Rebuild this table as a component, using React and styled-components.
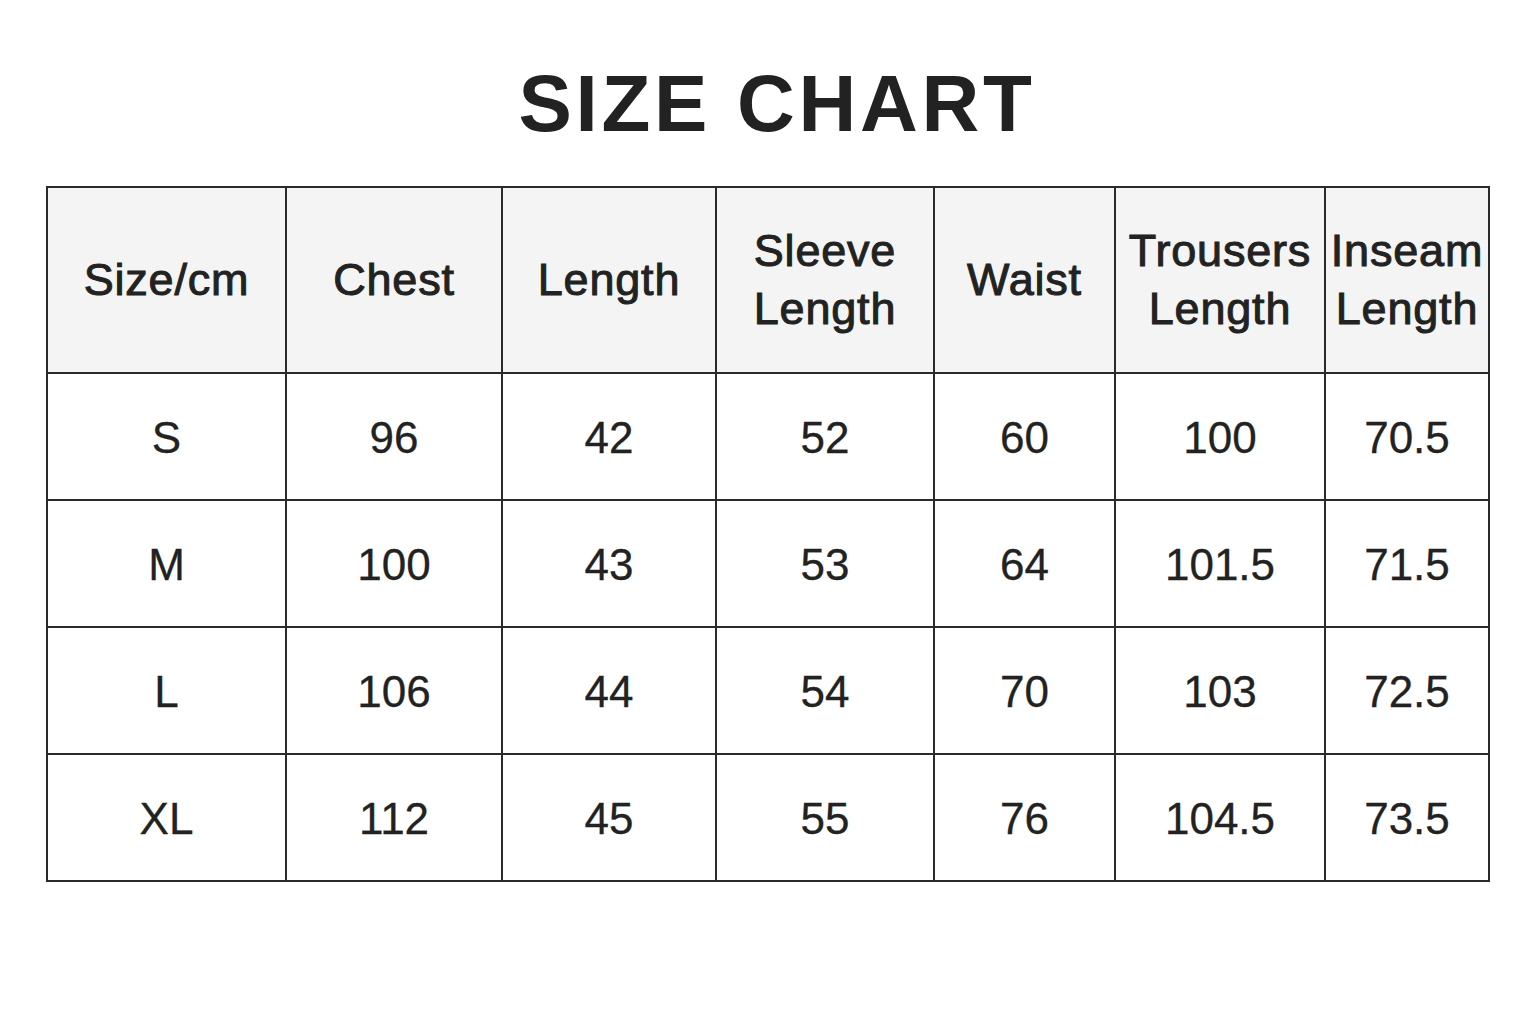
import React from "react";
import styled, { createGlobalStyle } from "styled-components";

const GlobalStyle = createGlobalStyle`
  html, body {
    margin: 0;
    padding: 0;
    background: #ffffff;
  }
  body {
    font-family: "Liberation Sans", Arial, sans-serif;
    color: #222222;
  }
`;

const Page = styled.div`
  width: 1536px;
  height: 1024px;
  box-sizing: border-box;
  padding: 66px 0 0 46px;
  background: #fff;
`;

const Title = styled.h1`
  margin: 0 0 44px;
  width: 1444px;
  box-sizing: border-box;
  padding-left: 18px;
  text-align: center;
  font-size: 80px;
  line-height: 76px;
  font-weight: 700;
  letter-spacing: 3.7px;
  color: #222;
`;

const Table = styled.div`
  display: grid;
  grid-template-columns: 239px 216px 214px 218px 181px 210px 164px;
  grid-template-rows: 186px repeat(4, 127px);
  width: max-content;
  border-top: 2px solid #2a2a2a;
  border-left: 2px solid #2a2a2a;
`;

const Cell = styled.div`
  display: flex;
  align-items: center;
  justify-content: center;
  text-align: center;
  box-sizing: border-box;
  border-right: 2px solid #2a2a2a;
  border-bottom: 2px solid #2a2a2a;
  background: #ffffff;
  font-size: 44px;
  font-weight: 400;
  line-height: 58px;
  color: #222;
  padding-top: 2px;
  -webkit-text-stroke: 0.3px #222;
`;

const HeadCell = styled(Cell)`
  background: #f4f4f4;
  font-size: 45px;
  letter-spacing: 0.8px;
  padding-top: 0;
  -webkit-text-stroke: 1px #222;
`;

const headers = [
  "Size/cm",
  "Chest",
  "Length",
  ["Sleeve", "Length"],
  "Waist",
  ["Trousers", "Length"],
  ["Inseam", "Length"],
];

const rows = [
  ["S", "96", "42", "52", "60", "100", "70.5"],
  ["M", "100", "43", "53", "64", "101.5", "71.5"],
  ["L", "106", "44", "54", "70", "103", "72.5"],
  ["XL", "112", "45", "55", "76", "104.5", "73.5"],
];

export default function App() {
  return (
    <>
      <GlobalStyle />
      <Page>
        <Title>SIZE CHART</Title>
        <Table>
          {headers.map((h, i) => (
            <HeadCell key={"h" + i}>
              {Array.isArray(h) ? (
                <span>
                  {h[0]}
                  <br />
                  {h[1]}
                </span>
              ) : (
                h
              )}
            </HeadCell>
          ))}
          {rows.map((r, ri) =>
            r.map((v, ci) => <Cell key={ri + "-" + ci}>{v}</Cell>)
          )}
        </Table>
      </Page>
    </>
  );
}
